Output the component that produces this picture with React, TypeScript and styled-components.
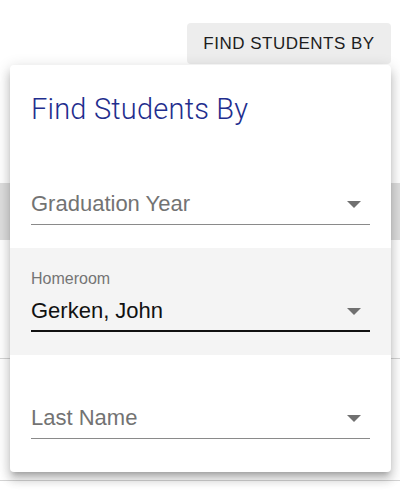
import React from "react";
import styled, { createGlobalStyle } from "styled-components";

const GlobalStyle = createGlobalStyle`
  html, body {
    margin: 0;
    padding: 0;
    background: #ffffff;
  }
  body {
    font-family: "Liberation Sans", Arial, sans-serif;
  }
`;

export const Page = styled.div`
  position: relative;
  width: 400px;
  height: 499px;
  overflow: hidden;
`;

export const Toolbar = styled.div`
  display: flex;
  justify-content: flex-end;
  padding: 23px 9px 0 0;
`;

export const MenuButton = styled.button`
  height: 41px;
  width: 204px;
  border: none;
  border-radius: 4px;
  background: #ededed;
  color: #1d1d1d;
  font-family: "Liberation Sans", Arial, sans-serif;
  font-size: 17px;
  letter-spacing: 0.5px;
  text-transform: uppercase;
  padding: 0;
  cursor: pointer;
`;

export const Table = styled.div`
  display: flex;
  flex-direction: column;
  margin-top: 119px;
`;

export const HeaderBand = styled.div`
  height: 57px;
  background: #dedede;
`;

export const TableRow = styled.div<{ $height: number }>`
  height: ${(p) => p.$height}px;
  border-bottom: 1px solid #d4d4d4;
`;

export const Popover = styled.div`
  position: absolute;
  top: 65px;
  left: 10px;
  width: 381px;
  height: 407px;
  box-sizing: border-box;
  background: #ffffff;
  border-radius: 4px;
  box-shadow: 0px 5px 5px -3px rgba(0, 0, 0, 0.2),
    0px 8px 10px 1px rgba(0, 0, 0, 0.14), 0px 3px 14px 2px rgba(0, 0, 0, 0.12);
  display: flex;
  flex-direction: column;
`;

export const Title = styled.h2`
  margin: 0;
  height: 76px;
  box-sizing: border-box;
  padding: 27px 21px 0 21px;
  font-family: Roboto, "Liberation Sans", sans-serif;
  font-weight: 300;
  font-size: 29px;
  line-height: 34px;
  letter-spacing: 0.2px;
  color: #1f2e8e;
`;

export const FieldSection = styled.div<{ $active?: boolean }>`
  height: 107px;
  box-sizing: border-box;
  padding: 0 21px 23px;
  display: flex;
  flex-direction: column;
  justify-content: flex-end;
  background: ${(p) => (p.$active ? "#f4f4f4" : "transparent")};
`;

export const FieldLabel = styled.span`
  font-size: 16px;
  line-height: 18px;
  color: #747474;
  margin-bottom: 10px;
`;

export const SelectRow = styled.div<{ $focused?: boolean }>`
  display: flex;
  align-items: center;
  justify-content: space-between;
  padding-bottom: ${(p) => (p.$focused ? 6 : 7)}px;
  border-bottom: ${(p) => (p.$focused ? "2px solid #111111" : "1px solid #8a8a8a")};
`;

export const SelectValue = styled.span<{ $placeholder?: boolean }>`
  font-size: 22px;
  line-height: 26px;
  color: ${(p) => (p.$placeholder ? "#737373" : "#111111")};
`;

export const Arrow = styled.svg`
  width: 14px;
  height: 7px;
  margin-right: 9px;
  fill: #707070;
`;

const DropArrow = () => (
  <Arrow viewBox="0 0 14 7">
    <polygon points="0,0 14,0 7,7" />
  </Arrow>
);

type Field = {
  label: string;
  value?: string;
};

const fields: Field[] = [
  { label: "Graduation Year" },
  { label: "Homeroom", value: "Gerken, John" },
  { label: "Last Name" },
];

export default function App() {
  return (
    <Page>
      <GlobalStyle />
      <Toolbar>
        <MenuButton>Find Students By</MenuButton>
      </Toolbar>
      <Table>
        <HeaderBand />
        <TableRow $height={118} />
        <TableRow $height={121} />
      </Table>
      <Popover>
        <Title>Find Students By</Title>
        {fields.map((f) => (
          <FieldSection key={f.label} $active={!!f.value}>
            {f.value && <FieldLabel>{f.label}</FieldLabel>}
            <SelectRow $focused={!!f.value}>
              <SelectValue $placeholder={!f.value}>
                {f.value || f.label}
              </SelectValue>
              <DropArrow />
            </SelectRow>
          </FieldSection>
        ))}
      </Popover>
    </Page>
  );
}
